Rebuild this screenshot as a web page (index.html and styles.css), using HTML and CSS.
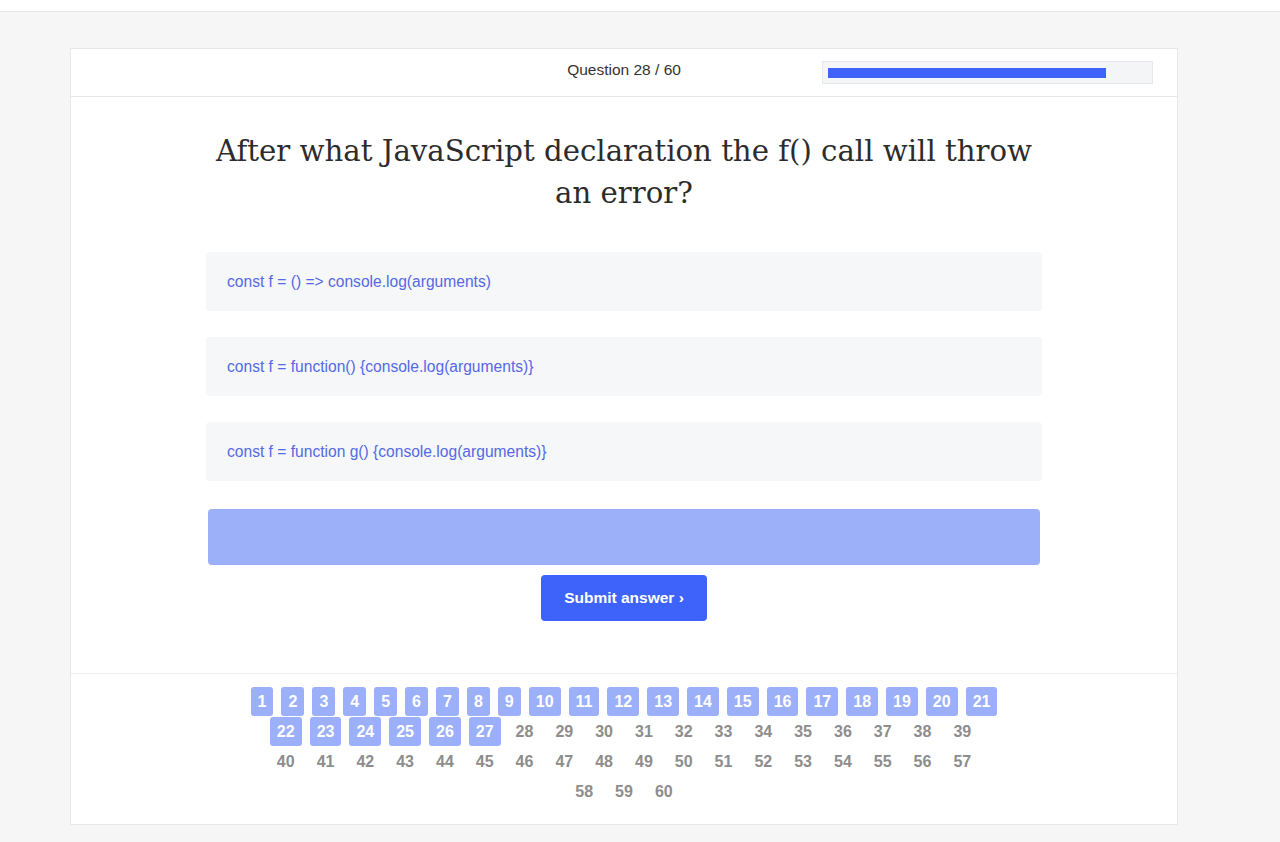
FILE: index.html
```html
<!DOCTYPE html>
<html>
<head>
<meta charset="utf-8">
<link rel="stylesheet" href="styles.css">
</head>
<body>
<div class="topbar"></div>
<main class="page">
  <section class="card">
    <header class="card-head">
      <div class="head-side"></div>
      <div class="q-count">Question 28 / 60</div>
      <div class="head-side head-right">
        <div class="progress"><div class="progress-fill" style="width: 87%"></div></div>
      </div>
    </header>
    <div class="card-body">
      <h1 class="title">After what JavaScript declaration the f() call will throw an error?</h1>
      <div class="options">
        <div class="option">const f = () =&gt; console.log(arguments)</div>
        <div class="option">const f = function() {console.log(arguments)}</div>
        <div class="option">const f = function g() {console.log(arguments)}</div>
        <div class="option option-selected"></div>
      </div>
      <div class="submit-wrap"><button class="submit">Submit answer ›</button></div>
    </div>
    <footer class="card-foot">
      <div class="nav-row">
        <span class="num done">1</span><span class="num done">2</span><span class="num done">3</span><span class="num done">4</span><span class="num done">5</span><span class="num done">6</span><span class="num done">7</span><span class="num done">8</span><span class="num done">9</span><span class="num done">10</span><span class="num done">11</span><span class="num done">12</span><span class="num done">13</span><span class="num done">14</span><span class="num done">15</span><span class="num done">16</span><span class="num done">17</span><span class="num done">18</span><span class="num done">19</span><span class="num done">20</span><span class="num done">21</span>
      </div>
      <div class="nav-row">
        <span class="num done">22</span><span class="num done">23</span><span class="num done">24</span><span class="num done">25</span><span class="num done">26</span><span class="num done">27</span><span class="num">28</span><span class="num">29</span><span class="num">30</span><span class="num">31</span><span class="num">32</span><span class="num">33</span><span class="num">34</span><span class="num">35</span><span class="num">36</span><span class="num">37</span><span class="num">38</span><span class="num">39</span>
      </div>
      <div class="nav-row">
        <span class="num">40</span><span class="num">41</span><span class="num">42</span><span class="num">43</span><span class="num">44</span><span class="num">45</span><span class="num">46</span><span class="num">47</span><span class="num">48</span><span class="num">49</span><span class="num">50</span><span class="num">51</span><span class="num">52</span><span class="num">53</span><span class="num">54</span><span class="num">55</span><span class="num">56</span><span class="num">57</span>
      </div>
      <div class="nav-row">
        <span class="num">58</span><span class="num">59</span><span class="num">60</span>
      </div>
    </footer>
  </section>
</main>
</body>
</html>
```

FILE: styles.css
```css
* { box-sizing: border-box; }
html, body { margin: 0; padding: 0; }
body {
  background: #f6f6f6;
  font-family: "Liberation Sans", Arial, sans-serif;
  color: #333;
  min-height: 842px;
}
.topbar {
  height: 12px;
  background: #ffffff;
  border-bottom: 1px solid #e9e9e9;
}
.page {
  padding: 36px 102px 0 70px;
}
.card {
  width: 1108px;
  background: #fff;
  border: 1px solid #e5e7ea;
}
.card-head {
  display: grid;
  grid-template-columns: 1fr auto 1fr;
  align-items: center;
  height: 48px;
  border-bottom: 1px solid #e6e8eb;
}
.q-count {
  font-size: 15.5px;
  color: #333;
  padding-bottom: 5px;
}
.head-right {
  display: flex;
  justify-content: flex-end;
  padding-right: 24px;
}
.progress {
  width: 331px;
  height: 23px;
  background: #f4f5f7;
  border: 1px solid #e6e8eb;
  padding: 6px 5px;
  margin-bottom: 1px;
}
.progress-fill {
  height: 10px;
  background: #3f63f8;
}
.card-body {
  padding: 33px 0 52px;
  display: flex;
  flex-direction: column;
  align-items: center;
}
.title {
  width: 836px;
  margin: 0;
  font-family: "DejaVu Serif", Georgia, serif;
  font-weight: normal;
  font-size: 29.2px;
  line-height: 42px;
  text-align: center;
  color: #2c2c2c;
}
.options {
  width: 836px;
  margin-top: 38px;
  display: flex;
  flex-direction: column;
  gap: 26px;
}
.option {
  height: 59px;
  display: flex;
  align-items: center;
  padding: 0 21px;
  background: #f6f7f9;
  border-radius: 4px;
  font-size: 15.6px;
  color: #5469e6;
}
.option-selected {
  margin: 2px 2px 0;
  height: 56px;
  background: #9cb0fa;
  border-radius: 4px;
}
.submit-wrap {
  margin-top: 10px;
  display: flex;
  justify-content: center;
}
.submit {
  width: 166px;
  height: 46px;
  border: none;
  border-radius: 4px;
  background: #3e63fb;
  color: #fff;
  font-family: "Liberation Sans", Arial, sans-serif;
  font-weight: bold;
  font-size: 15.5px;
  padding: 0;
}
.card-foot {
  border-top: 1px solid #eceef0;
  padding: 13px 0 17px;
}
.nav-row {
  display: flex;
  justify-content: center;
  height: 30px;
}
.num {
  height: 29px;
  line-height: 29px;
  padding: 0 7px;
  margin: 0 4px;
  font-size: 16px;
  font-weight: bold;
  color: #8d8d8d;
}
.num.done {
  background: #9cb0fa;
  color: #fff;
  border-radius: 3px;
}
```
